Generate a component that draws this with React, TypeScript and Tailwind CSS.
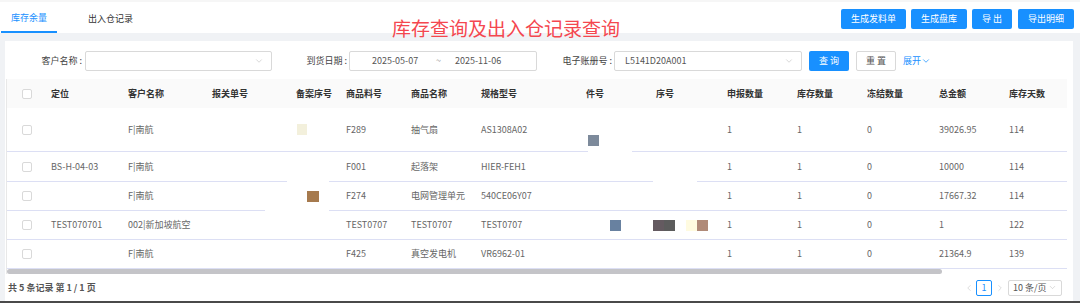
import { ChevronDown, ChevronLeft, ChevronRight } from 'lucide-react';

type Sq = { off: number; w: number; color: string; drop?: number };
type Cell = string | Sq[];
type Gap = [number, number, number];

const headers = ['', '定位', '客户名称', '报关单号', '备案序号', '商品料号', '商品名称', '规格型号', '件号', '序号', '申报数量', '库存数量', '冻结数量', '总金额', '库存天数'];

const rows: { h: string; cells: Cell[]; gaps: Gap[] }[] = [
  {
    h: 'h-[44px]',
    cells: ['', '', 'F|南航', '', [{ off: 5, w: 10, color: '#f3f0dc' }], 'F289', '抽气扇', 'AS1308A02', [{ off: 6, w: 11, color: '#7d8a9b', drop: 22 }], '', '1', '1', '0', '39026.95', '114'],
    gaps: [[8, 6, 50]],
  },
  {
    h: 'h-[30px]',
    cells: ['', 'BS-H-04-03', 'F|南航', '', '', 'F001', '起落架', 'HIER-FEH1', '', '', '1', '1', '0', '10000', '114'],
    gaps: [[3, 79, 84], [4, 0, 37], [9, 1, 45]],
  },
  {
    h: 'h-[29px]',
    cells: ['', '', 'F|南航', '', [{ off: 15, w: 12, color: '#a67a4e' }], 'F274', '电网管理单元', '540CE06Y07', '', '', '1', '1', '0', '17667.32', '114'],
    gaps: [[3, 57, 84], [4, 0, 37]],
  },
  {
    h: 'h-[29px]',
    cells: ['', 'TEST070701', '002|新加坡航空', '', '', 'TEST0707', 'TEST0707', 'TEST0707', [{ off: 28, w: 11, color: '#6881a0' }], [{ off: 1, w: 11, color: '#645a60' }, { off: 0, w: 11, color: '#5c5c5c' }, { off: 11, w: 11, color: '#fffbe0' }, { off: 0, w: 11, color: '#b08a78' }], '1', '1', '0', '1', '122'],
    gaps: [],
  },
  {
    h: 'h-[29px]',
    cells: ['', '', 'F|南航', '', '', 'F425', '真空发电机', 'VR6962-01', '', '', '1', '1', '0', '21364.9', '139'],
    gaps: [],
  },
];

const gridCols = 'grid grid-cols-[40px_77px_84px_84px_50px_65px_70px_105px_70px_71px_70px_70px_72px_70px_62px]';

function Checkbox() {
  return <div className="w-[10px] h-[10px] border border-[#d9d9d9] rounded-[2px] bg-white" />;
}

function Line({ gap }: { gap?: Gap }) {
  if (!gap) return <div className="h-px bg-[#dcdff4]" />;
  return (
    <div className="h-px flex">
      <div className="h-px bg-[#dcdff4]" style={{ width: gap[1] }} />
      <div className="h-px" style={{ width: gap[2] - gap[1] }} />
      <div className="h-px flex-1 bg-[#dcdff4]" />
    </div>
  );
}

function Select({ w, value }: { w: string; value?: string }) {
  return (
    <div className={`${w} h-5 border border-[#d9d9d9] rounded-[2px] bg-white flex items-center pl-[10px] pr-[7px] text-[#555]`}>
      <span className="flex-1">{value}</span>
      <ChevronDown size={10} strokeWidth={1.5} className="text-[#c0c0c0]" />
    </div>
  );
}

export default function App() {
  return (
    <div className="relative w-[1080px] h-[303px] overflow-hidden bg-[#f0f2f5] flex flex-col text-[9px] font-['Noto_Sans_CJK_SC',sans-serif]">
      {/* tabs + actions */}
      <div className="h-[33px] bg-white flex border-t-2 border-[#f6f6f6]">
        <div className="ml-[1px] w-[56px] h-[31px] pt-[3px] border-b-2 border-[#1890ff] text-[#1890ff] flex items-center justify-center">库存余量</div>
        <div className="ml-[31px] h-[31px] pt-[3px] text-[#333] flex items-center">出入仓记录</div>
        <div className="ml-auto mr-[6px] mt-[7px] flex gap-[5px] h-5">
          <button className="w-[65px] h-5 rounded-[2px] bg-[#1890ff] text-white">生成发料单</button>
          <button className="w-[56px] h-5 rounded-[2px] bg-[#1890ff] text-white">生成盘库</button>
          <button className="w-[40px] h-5 rounded-[2px] bg-[#1890ff] text-white">导 出</button>
          <button className="ml-[1px] w-[56px] h-5 rounded-[2px] bg-[#1890ff] text-white">导出明细</button>
        </div>
      </div>

      <div className="absolute left-[392px] top-[17px] text-[19px] leading-[21px] text-[#f4474f]">库存查询及出入仓记录查询</div>

      <div className="flex-1 flex pl-[5px] pt-[8px]">
        <div className="flex-1 bg-white pl-[1px] pt-[10px] flex flex-col">
          {/* filters */}
          <div className="h-5 flex items-center text-[#444]">
            <div className="w-[79px] text-right pr-[3px]">客户名称<span className="ml-[2px]">:</span></div>
            <Select w="w-[187px]" />
            <div className="w-[77px] text-right pr-[2px]">到货日期<span className="ml-[2px]">:</span></div>
            <div className="w-[188px] h-5 border border-[#d9d9d9] rounded-[2px] flex items-center pl-[22px] text-[#555]">
              <span className="w-[64px]">2025-05-07</span>
              <span className="w-[19px] text-[#999]">~</span>
              <span>2025-11-06</span>
            </div>
            <div className="w-[77px] text-right pr-[2px]">电子账册号<span className="ml-[2px]">:</span></div>
            <Select w="w-[188px]" value="L5141D20A001" />
            <button className="ml-[7px] w-[40px] h-5 rounded-[2px] bg-[#1890ff] text-white">查 询</button>
            <button className="ml-[7px] w-[40px] h-5 rounded-[2px] border border-[#d9d9d9] text-[#555] bg-white">重 置</button>
            <div className="ml-[7px] flex items-center text-[#1890ff]">
              展开<ChevronDown size={10} strokeWidth={1.8} />
            </div>
          </div>

          {/* table */}
          <div className="mt-[8px] w-[1061px] border-l border-[#e8e8e8]">
            <div className={`${gridCols} h-[29px] bg-[#fafafa] font-bold text-[#333]`}>
              {headers.map((h, i) => (
                <div key={i} className={`flex items-center ${i === 0 ? 'justify-center' : 'pl-1'}`}>
                  {i === 0 ? <Checkbox /> : h}
                </div>
              ))}
            </div>
            {rows.map((r, ri) => (
              <div key={ri} className={`${gridCols} ${r.h} text-[#666]`}>
                {r.cells.map((c, ci) => (
                  <div key={ci} className="flex flex-col">
                    <div className={`flex-1 flex items-center ${ci === 0 ? 'justify-center' : 'pl-1'} whitespace-nowrap`}>
                      {ci === 0 ? (
                        <Checkbox />
                      ) : typeof c === 'string' ? (
                        c
                      ) : (
                        <div className="flex -ml-1">
                          {c.map((s, si) => (
                            <div
                              key={si}
                              className="h-[11px]"
                              style={{ width: s.w, marginLeft: s.off, background: s.color, marginTop: s.drop ?? 0 }}
                            />
                          ))}
                        </div>
                      )}
                    </div>
                    <Line gap={r.gaps.find(g => g[0] === ci)} />
                  </div>
                ))}
              </div>
            ))}
            <div className="h-[5px] flex">
              <div className="w-[935px] h-[5px] rounded-full bg-[#c4c4c8]" />
            </div>
          </div>

          {/* footer */}
          <div className="flex-1 flex items-center pl-[2px] pr-[11px]">
            <div className="font-semibold text-[#555]">共 5 条记录 第 1 / 1 页</div>
            <div className="ml-auto flex items-center">
              <ChevronLeft size={10} strokeWidth={1.5} className="text-[#c8c8c8]" />
              <div className="ml-[2px] w-4 h-4 border border-[#1890ff] rounded-[2px] text-[#1890ff] flex items-center justify-center">1</div>
              <ChevronRight size={10} strokeWidth={1.5} className="ml-[3px] text-[#c8c8c8]" />
              <div className="ml-[3px] w-[54px] h-4 border border-[#d9d9d9] rounded-[2px] flex items-center pl-[4px] pr-[4px] text-[#555] whitespace-nowrap">
                <span className="flex-1">10 条/页</span>
                <ChevronDown size={9} strokeWidth={1.5} className="text-[#c0c0c0]" />
              </div>
            </div>
          </div>
        </div>
        <div className="w-[7px]" />
      </div>
      <div className="h-[2px] bg-[#4a4a4a]" />
    </div>
  );
}
